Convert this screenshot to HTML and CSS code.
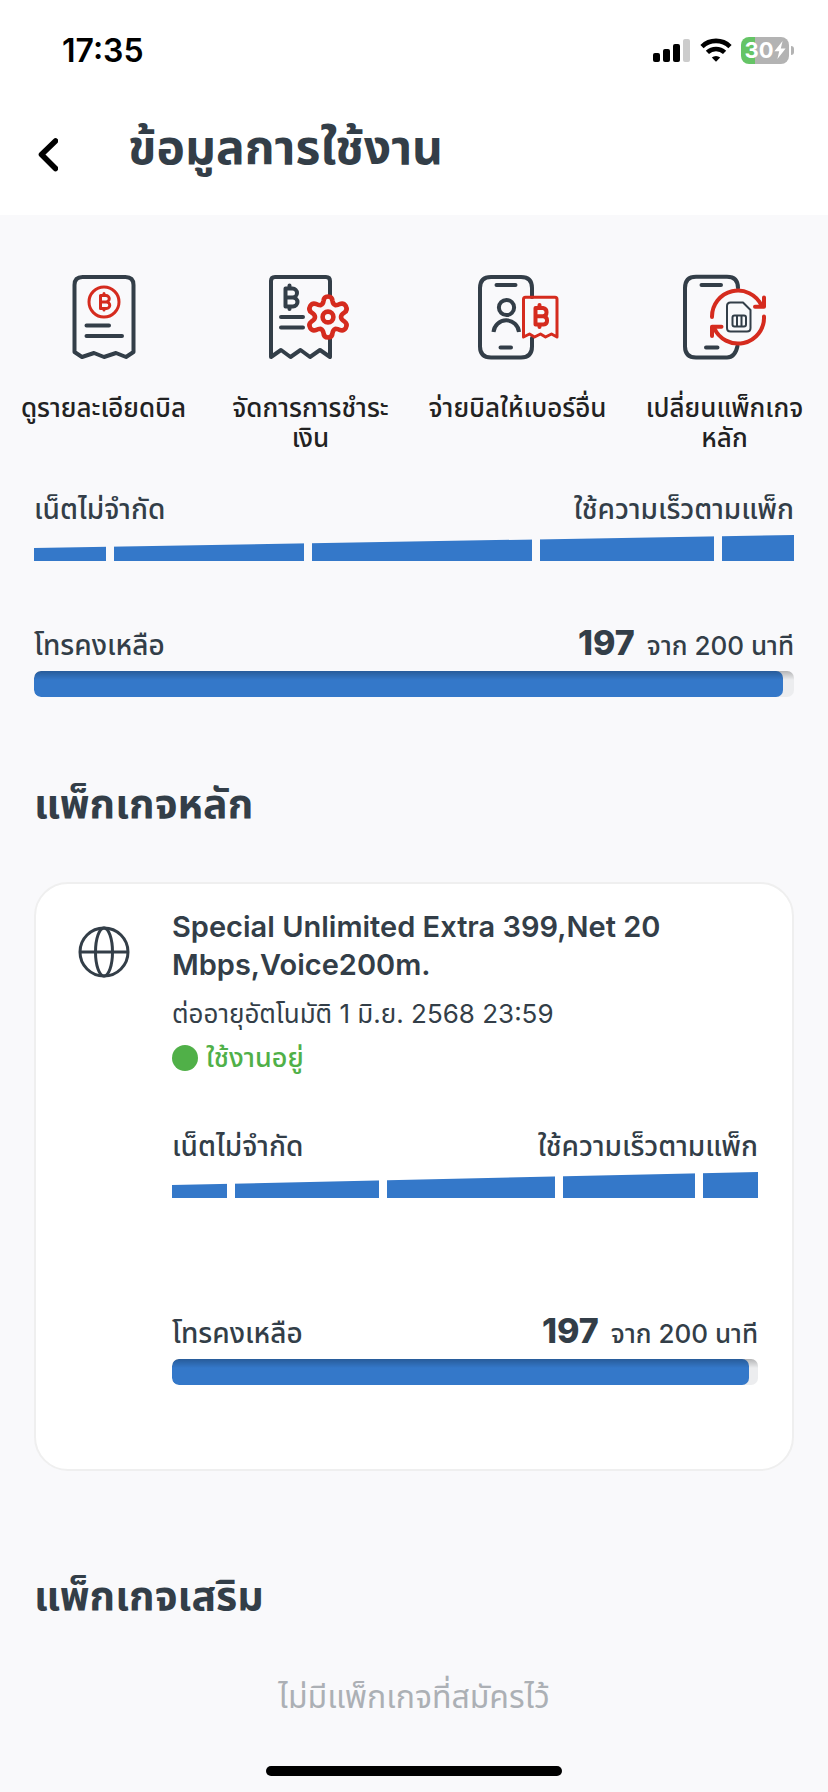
FILE: index.html
```html
<!DOCTYPE html>
<html lang="th">
<head>
    <meta charset="utf-8">
    <meta name="viewport" content="width=device-width, initial-scale=1">
    <title>ข้อมูลการใช้งาน</title>
    <link rel="stylesheet" href="styles.css">
</head>
<body>
    <header class="header">
        <div class="status-bar">
            <span class="time">17:35</span>
            <div class="status-icons">
                <svg class="signal" viewBox="0 0 38 24" width="38" height="24">
                    <rect x="0" y="15" width="7" height="9" rx="2"/>
                    <rect x="10" y="11" width="7" height="13" rx="2"/>
                    <rect x="20" y="6" width="7" height="18" rx="2"/>
                    <rect x="30" y="1" width="7" height="23" rx="2" fill="#cccccc"/>
                </svg>
                <svg class="wifi" viewBox="0 0 32 24" width="32" height="24" fill="none" stroke="#000" stroke-width="4.6">
                    <path d="M2 8.6 A20 20 0 0 1 30 8.6"/>
                    <path d="M7.4 14.4 A12.4 12.4 0 0 1 24.6 14.4"/>
                    <path d="M16 23.8 L11.8 19.6 A6 6 0 0 1 20.2 19.6 Z" fill="#000" stroke="none"/>
                </svg>
                <div class="battery">
                    <span class="battery-level">30</span>
                    <svg viewBox="0 0 12 18" width="12" height="18"><path d="M8.6 0 L0.4 10.2 H5.2 L3.4 18 L11.6 7.6 H6.8 Z" fill="#fff"/></svg>
                </div>
            </div>
        </div>
        <div class="title-bar">
            <button class="back" type="button" aria-label="ย้อนกลับ">
                <svg viewBox="0 0 20 34" width="20" height="34" fill="none" stroke="#000" stroke-width="5.6" stroke-linecap="round" stroke-linejoin="round">
                    <path d="M17.5 3 L3.5 16.5 L17.5 30.5"/>
                </svg>
            </button>
            <h1>ข้อมูลการใช้งาน</h1>
        </div>
    </header>

    <main>
        <nav class="actions">
            <a href="#">
                <svg class="icon" viewBox="0 0 96 96">
                    <path d="M18.5 84 V17 Q18.5 9 26.5 9 H69.5 Q77.5 9 77.5 17 V84 L70 89 L60 85 L48 89 L38 85 L26 89 Z"/>
                    <path d="M30.5 57.5 H53 M30.5 68 H66"/>
                    <g class="red" stroke-width="3">
                        <circle cx="48" cy="34" r="15"/>
                        <path d="M44.5 27.5 H50 A3.2 3.2 0 0 1 50 34 H44.5 Z M44.5 34 H50.5 A3.2 3.2 0 0 1 50.5 40.5 H44.5 Z M48 25.5 V27 M48 41 V42"/>
                    </g>
                </svg>
                <span>ดูรายละเอียดบิล</span>
            </a>
            <a href="#">
                <svg class="icon" viewBox="0 0 96 96">
                    <path d="M67 28 V13 Q67 9 63 9 H12 Q8 9 8 13 V89 L18 82 L27.5 89 L37.5 82 L47 89 L57 82 L67 89 V71"/>
                    <path d="M18 49 H40 M18 59.5 H40"/>
                    <path d="M22.5 20.5 H29.5 A4.4 4.4 0 0 1 29.5 29.5 H22.5 Z M22.5 29.5 H30 A4.4 4.4 0 0 1 30 38.5 H22.5 Z M26.5 17.5 V20 M26.5 39 V41"/>
                    <g class="red" stroke-width="4.6">
                        <path d="M60.5 33 Q60.8 28.5 65 28.5 Q69.2 28.5 69.5 33 Q69.8 36 72.5 37.3 Q75 37.2 76.5 36.2 Q80.5 34.5 82.8 38 Q85 42 81.5 44.5 Q78 46.5 78 49 Q78 51.5 81.5 53.5 Q85 56 82.8 60 Q80.5 63.5 76.5 61.8 Q75 60.8 72.5 60.7 Q69.8 62 69.5 65 Q69.2 69.5 65 69.5 Q60.8 69.5 60.5 65 Q60.2 62 57.5 60.7 Q55 60.8 53.5 61.8 Q49.5 63.5 47.2 60 Q45 56 48.5 53.5 Q52 51.5 52 49 Q52 46.5 48.5 44.5 Q45 42 47.2 38 Q49.5 34.5 53.5 36.2 Q55 37.2 57.5 37.3 Q60.2 36 60.5 33 Z"/>
                        <circle cx="65" cy="49" r="5.4"/>
                    </g>
                </svg>
                <span>จัดการการชำระ<br>เงิน</span>
            </a>
            <a href="#">
                <svg class="icon" viewBox="0 0 96 96">
                    <path d="M62 29 V20 Q62 9 51 9 H21 Q10 9 10 20 V78.5 Q10 89.5 21 89.5 H51 Q62 89.5 62 78.5 V70"/>
                    <path d="M26.5 17 H45.5 M30.5 79.5 H41"/>
                    <circle cx="36.5" cy="39.5" r="7.6"/>
                    <path d="M23.5 64 A12.8 12.8 0 0 1 49 64" stroke-linecap="butt"/>
                    <g class="red">
                        <path stroke-width="3" d="M53.5 69 V31.3 Q53.5 29.3 55.5 29.3 H85 Q87 29.3 87 31.3 V69 L81.5 66 L75.5 69 L70.5 66 L64.5 69 L59.5 66 Z"/>
                        <path d="M65.5 40 H73 A4.2 4.2 0 0 1 73 48.3 H65.5 Z M65.5 48.3 H73.5 A4.2 4.2 0 0 1 73.5 56.6 H65.5 Z M69.5 37 V39 M69.5 57 V59"/>
                    </g>
                </svg>
                <span>จ่ายบิลให้เบอร์อื่น</span>
            </a>
            <a href="#">
                <svg class="icon" viewBox="0 0 96 96">
                    <path d="M61 20 Q61 8.7 50 8.7 H19 Q8 8.7 8 20 V78.5 Q8 89.5 19 89.5 H50 Q58 89.5 60.5 78"/>
                    <path d="M24.5 17 H44 M29 79.5 H40.5"/>
                    <g class="red">
                        <path d="M35 49 A26 26 0 0 1 84.5 37.5 M87 48.5 A26 26 0 0 1 37 59.5"/>
                        <path d="M87 29.5 V38.7 H78 M35 68 V58.7 H44.5"/>
                    </g>
                    <path stroke-width="2" d="M53.5 34.5 H66 L73.5 42 V60 Q73.5 63.5 70 63.5 H53.5 Q50 63.5 50 60 V38 Q50 34.5 53.5 34.5 Z"/>
                    <path stroke-width="2" d="M57.5 47.5 H67 Q69 47.5 69 49.5 V56.5 Q69 58.5 67 58.5 H57.5 Q55.5 58.5 55.5 56.5 V49.5 Q55.5 47.5 57.5 47.5 Z M60 47.5 V58.5 M64.5 47.5 V58.5"/>
                </svg>
                <span>เปลี่ยนแพ็กเกจ<br>หลัก</span>
            </a>
        </nav>

        <section class="summary">
            <div class="usage">
                <div class="usage-row">
                    <span>เน็ตไม่จำกัด</span>
                    <span>ใช้ความเร็วตามแพ็ก</span>
                </div>
                <div class="net-bar"><i></i><i></i><i></i><i></i><i></i></div>
            </div>
            <div class="usage">
                <div class="usage-row">
                    <label for="voice-total">โทรคงเหลือ</label>
                    <span class="amount"><b>197</b>จาก 200 นาที</span>
                </div>
                <progress id="voice-total" value="197" max="200"></progress>
            </div>
        </section>

        <section class="packages">
            <h2>แพ็กเกจหลัก</h2>
            <article class="card">
                <svg class="globe" viewBox="0 0 52 52" fill="none" stroke="#333e48" stroke-width="3">
                    <circle cx="26" cy="26" r="24"/>
                    <ellipse cx="26" cy="26" rx="8.5" ry="24"/>
                    <path d="M2 26 H50"/>
                </svg>
                <div class="card-body">
                    <h3>Special Unlimited Extra 399,Net 20 Mbps,Voice200m.</h3>
                    <p class="renew">ต่ออายุอัตโนมัติ 1 มิ.ย. 2568 23:59</p>
                    <p class="active">ใช้งานอยู่</p>
                    <div class="usage">
                        <div class="usage-row">
                            <span>เน็ตไม่จำกัด</span>
                            <span>ใช้ความเร็วตามแพ็ก</span>
                        </div>
                        <div class="net-bar"><i></i><i></i><i></i><i></i><i></i></div>
                    </div>
                    <div class="usage">
                        <div class="usage-row">
                            <label for="voice-main">โทรคงเหลือ</label>
                            <span class="amount"><b>197</b>จาก 200 นาที</span>
                        </div>
                        <progress id="voice-main" value="197" max="200"></progress>
                    </div>
                </div>
            </article>
        </section>

        <section class="addons">
            <h2>แพ็กเกจเสริม</h2>
            <p class="empty">ไม่มีแพ็กเกจที่สมัครไว้</p>
        </section>
    </main>

    <div class="home-indicator"></div>
</body>
</html>
```
FILE: styles.css
```css
* {
    box-sizing: border-box;
}

body {
    margin: 0;
    min-height: 100vh;
    display: flex;
    flex-direction: column;
    font-family: Inter, "Noto Sans Thai", "Noto Sans", sans-serif;
    background: #f9f9fb;
    color: #333e48;
}

h1, h2, h3, p {
    margin: 0;
}

/* Header */
.header {
    background: #fff;
    padding-bottom: 26px;
}

.status-bar {
    display: flex;
    justify-content: space-between;
    align-items: center;
    height: 100px;
    padding: 0 34px 0 62px;
    color: #000;
}

.time {
    font-size: 32px;
    font-weight: 600;
}

.status-icons {
    display: flex;
    align-items: center;
    gap: 9px;
}

.battery {
    position: relative;
    display: flex;
    align-items: center;
    justify-content: center;
    width: 48px;
    height: 27px;
    margin-right: 5px;
    border-radius: 8px;
    background: linear-gradient(to right, #65c466 30%, #b3b3b3 30%);
    color: #fff;
}

.battery::after {
    content: '';
    position: absolute;
    right: -5px;
    top: 9px;
    width: 3px;
    height: 9px;
    border-radius: 0 4px 4px 0;
    background: #b3b3b3;
}

.battery-level {
    font-size: 22px;
    font-weight: 700;
}

.title-bar {
    display: flex;
    align-items: center;
    height: 89px;
    padding: 5px 34px 0;
}

.back {
    width: 94px;
    height: 60px;
    padding: 18px 4px 0;
    border: none;
    background: none;
    text-align: left;
    cursor: pointer;
}

.title-bar h1 {
    font-size: 48px;
    line-height: 60px;
    font-weight: 700;
}

/* Shortcuts */
.actions {
    display: grid;
    grid-template-columns: repeat(4, 1fr);
    padding-top: 53px;
}

.actions a {
    display: flex;
    flex-direction: column;
    align-items: center;
    gap: 29px;
    font-size: 26px;
    line-height: 30px;
    font-weight: 500;
    text-align: center;
    text-decoration: none;
    white-space: nowrap;
    color: #222;
}

.icon {
    width: 96px;
    height: 96px;
    fill: none;
    stroke: #333e48;
    stroke-width: 4;
    stroke-linecap: round;
    stroke-linejoin: round;
}

.icon .red {
    stroke: #d52b1e;
}

/* Usage bars */
.summary {
    display: flex;
    flex-direction: column;
    gap: 64px;
    padding: 36px 34px 0;
}

.usage-row {
    display: flex;
    justify-content: space-between;
    align-items: baseline;
    height: 40px;
    margin-bottom: 6px;
    font-size: 28px;
    line-height: 40px;
    font-weight: 500;
}

.usage-row .amount {
    font-size: 26px;
}

.usage-row b {
    margin-right: 12px;
    font-size: 34px;
    line-height: 1;
    font-weight: 800;
}

.net-bar {
    display: flex;
    gap: 8px;
    height: 26px;
    clip-path: polygon(0 50%, 100% 0, 100% 100%, 0 100%);
}

.net-bar i {
    flex: 72;
    background: #3478c9;
}

.net-bar i:nth-child(2) {
    flex: 190;
}

.net-bar i:nth-child(3) {
    flex: 220;
}

.net-bar i:nth-child(4) {
    flex: 174;
}

progress {
    display: block;
    width: 100%;
    height: 26px;
    border: none;
    border-radius: 7px;
    overflow: hidden;
    appearance: none;
    -webkit-appearance: none;
}

progress::-webkit-progress-bar {
    background: linear-gradient(rgba(0, 0, 0, 0.24), transparent 9px) #ecedef;
}

progress::-webkit-progress-value {
    border-radius: 7px;
    background: linear-gradient(rgba(0, 0, 0, 0.24), transparent 9px) #3478c9;
}

/* Packages */
h2 {
    font-size: 41px;
    line-height: 56px;
    font-weight: 700;
}

.packages {
    padding: 78px 34px 0;
}

.card {
    display: flex;
    margin-top: 51px;
    padding: 24px 34px 84px 42px;
    border: 2px solid #efefef;
    border-radius: 34px;
    background: #fff;
}

.globe {
    flex: none;
    width: 52px;
    height: 52px;
    margin: 18px 42px 0 0;
}

.card-body {
    flex: 1;
}

.card h3 {
    font-size: 29px;
    line-height: 38px;
    font-weight: 600;
}

.renew {
    margin-top: 8px;
    font-size: 26px;
    line-height: 44px;
}

.active {
    display: flex;
    align-items: center;
    gap: 8px;
    font-size: 27px;
    line-height: 44px;
    font-weight: 500;
    color: #50b048;
}

.active::before {
    content: '';
    width: 26px;
    height: 26px;
    border-radius: 50%;
    background: #50b048;
}

.card .usage {
    margin-top: 46px;
}

.card .usage + .usage {
    margin-top: 115px;
}

.addons {
    padding: 96px 34px 0;
}

.empty {
    margin-top: 54px;
    font-size: 32px;
    line-height: 40px;
    text-align: center;
    color: #acb0b5;
}

.home-indicator {
    width: 296px;
    height: 10px;
    margin: auto auto 16px;
    border-radius: 5px;
    background: #000;
}
```
